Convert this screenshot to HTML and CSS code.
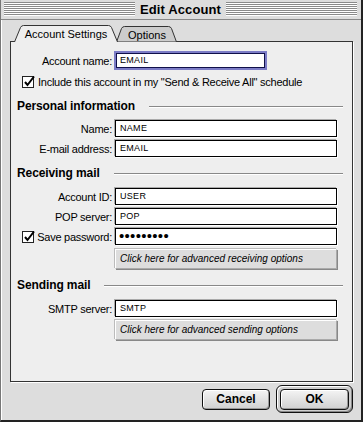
FILE: index.html
```html
<!DOCTYPE html>
<html>
<head>
<meta charset="utf-8">
<link rel="stylesheet" href="styles.css">
</head>
<body>
<div class="window">
  <div class="titlebar">
    <div class="stripes"></div>
    <div class="title">Edit Account</div>
    <div class="stripes"></div>
  </div>
  <div class="content">
    <div class="tabs">
      <div class="tab tab-active">
        <svg class="tab-shape" width="106" height="17" viewBox="0 0 106 17"><path d="M0.5,17 L6.5,2.5 Q7.5,0.5 9.5,0.5 L94.5,0.5 Q96.5,0.5 97.5,2.5 L103.5,17" fill="#eeeeee" stroke="#333" stroke-width="1"/></svg>
        <span class="tab-label">Account Settings</span>
      </div>
      <div class="tab tab-inactive">
        <svg class="tab-shape" width="62" height="16" viewBox="0 0 62 16"><path d="M0.5,16 L5.5,2.5 Q6.5,0.5 8.5,0.5 L52.5,0.5 Q54.5,0.5 55.5,2.5 L60.5,16 Z" fill="#cccccc" stroke="#333" stroke-width="1"/></svg>
        <span class="tab-label">Options</span>
      </div>
    </div>
    <div class="panel">
      <div class="row row-account">
        <label class="label">Account name:</label>
        <div class="field field-focus field-short">EMAIL</div>
      </div>
      <div class="check-row">
        <svg class="checkbox" width="13" height="13" viewBox="0 0 13 13"><rect x="0.5" y="1.5" width="11" height="11" fill="#fff" stroke="#222"/><path d="M3,7 L5.5,10 L12,1.5" fill="none" stroke="#000" stroke-width="2"/></svg>
        <span class="check-text">Include this account in my "Send &amp; Receive All" schedule</span>
      </div>
      <div class="heading h-personal"><span>Personal information</span><div class="rule"></div></div>
      <div class="row r-name">
        <label class="label">Name:</label>
        <div class="field">NAME</div>
      </div>
      <div class="row r-gap">
        <label class="label">E-mail address:</label>
        <div class="field">EMAIL</div>
      </div>
      <div class="heading h-receiving"><span>Receiving mail</span><div class="rule"></div></div>
      <div class="row r-first">
        <label class="label">Account ID:</label>
        <div class="field">USER</div>
      </div>
      <div class="row r-gap">
        <label class="label">POP server:</label>
        <div class="field">POP</div>
      </div>
      <div class="row r-gap">
        <label class="label label-check">
          <svg class="checkbox" width="13" height="13" viewBox="0 0 13 13"><rect x="0.5" y="1.5" width="11" height="11" fill="#fff" stroke="#222"/><path d="M3,7 L5.5,10 L12,1.5" fill="none" stroke="#000" stroke-width="2"/></svg>
          <span>Save password:</span>
        </label>
        <div class="field password">•••••••••</div>
      </div>
      <div class="row r-btn">
        <span></span>
        <div class="adv-btn">Click here for advanced receiving options</div>
      </div>
      <div class="heading h-sending"><span>Sending mail</span><div class="rule"></div></div>
      <div class="row r-first">
        <label class="label">SMTP server:</label>
        <div class="field">SMTP</div>
      </div>
      <div class="row r-btn2">
        <span></span>
        <div class="adv-btn">Click here for advanced sending options</div>
      </div>
    </div>
    <div class="footer">
      <div class="btn">Cancel</div>
      <div class="default-ring"><div class="btn btn-ok">OK</div></div>
    </div>
  </div>
</div>
</body>
</html>
```
FILE: styles.css
```css
html, body {
  margin: 0;
  padding: 0;
  background: #dddddd;
}
.window {
  width: 363px;
  height: 422px;
  box-sizing: border-box;
  background: #dddddd;
  border-left: 1px solid #777;
  border-right: 2px solid #222;
  border-bottom: 2px solid #222;
  box-shadow: inset 1px 0 0 #fff;
  font-family: "Liberation Sans", Arial, sans-serif;
  color: #000;
  display: flex;
  flex-direction: column;
}
.titlebar {
  height: 20px;
  box-sizing: border-box;
  display: flex;
  align-items: center;
  padding: 0 4px 1px 3px;
  border-bottom: 1px solid #888;
  background: #dddddd;
}
.stripes {
  flex: 1;
  height: 14px;
  background: repeating-linear-gradient(to bottom, #8a8a8a 0 1px, #ffffff 1px 2px);
}
.title {
  font-weight: bold;
  font-size: 13px;
  padding: 0 5px;
  letter-spacing: 0.1px;
}
.content {
  flex: 1;
  display: flex;
  flex-direction: column;
  padding: 5px 0 0 9px;
}
.tabs {
  display: flex;
  height: 17px;
  margin-bottom: -1px;
  position: relative;
  z-index: 2;
  padding-left: 4px;
}
.tab {
  position: relative;
  height: 17px;
  display: flex;
  align-items: center;
  justify-content: center;
  font-size: 11px;
}
.tab-shape {
  position: absolute;
  left: 0;
  top: 0;
}
.tab-label {
  position: relative;
  padding-top: 1px;
}
.tab-active {
  width: 106px;
  z-index: 2;
}
.tab-active .tab-label {
  left: -1px;
}
.tab-inactive {
  width: 62px;
  margin-left: -4px;
  margin-top: 1px;
  height: 16px;
  z-index: 1;
}
.panel {
  width: 343px;
  height: 341px;
  box-sizing: border-box;
  background: #eeeeee;
  border: 1px solid #333;
  box-shadow: 1px 1px 0 #fff;
  position: relative;
  z-index: 1;
  font-size: 11px;
}
.row {
  display: grid;
  grid-template-columns: 101px 222px;
  column-gap: 3px;
  align-items: center;
  height: 17px;
}
.label {
  text-align: right;
  white-space: nowrap;
  letter-spacing: -0.25px;
}
.label-check {
  display: flex;
  align-items: center;
  justify-content: space-between;
  padding-left: 11px;
}
.field {
  height: 17px;
  box-sizing: border-box;
  background: #fff;
  border: 1px solid #000;
  box-shadow: -1px -1px 0 #aaa, 1px 1px 0 #fff;
  font-size: 9px;
  line-height: 15px;
  padding-left: 4px;
  letter-spacing: 0.3px;
}
.password {
  font-size: 15px;
  line-height: 14px;
  letter-spacing: 0.3px;
  padding-left: 3px;
}
.row-account {
  margin-top: 9px;
  height: 19px;
}
.field-focus {
  height: 15px;
  border: 1px solid #10104a;
  box-shadow: 0 0 0 2px #7c7cc6;
  line-height: 13px;
  padding-left: 3px;
}
.field-short {
  width: 149px;
  margin-left: 1px;
}
.check-row {
  display: flex;
  align-items: center;
  gap: 3px;
  margin-top: 5px;
  padding-left: 11px;
  height: 13px;
}
.check-text {
  letter-spacing: -0.25px;
  white-space: nowrap;
}
.checkbox {
  display: block;
  flex: none;
}
.heading {
  display: flex;
  align-items: center;
  gap: 14px;
  height: 14px;
  padding: 0 9px 0 6px;
  font-weight: bold;
  font-size: 12px;
  letter-spacing: -0.1px;
}
.rule {
  flex: 1;
  height: 1px;
  background: #888;
  box-shadow: 0 1px 0 #fff;
}
.h-personal { margin-top: 11px; }
.h-receiving { margin-top: 9px; }
.h-sending { margin-top: 9px; }
.r-name { margin-top: 7px; }
.r-gap { margin-top: 3px; }
.r-first { margin-top: 8px; }
.r-btn { margin-top: 4px; height: 20px; }
.r-btn2 { margin-top: 3px; height: 20px; }
.adv-btn {
  height: 20px;
  box-sizing: border-box;
  background: #dddddd;
  border: 1px solid #aaa;
  border-top-color: #fff;
  border-left-color: #fff;
  box-shadow: -1px -1px 0 #bbb, 1px 1px 0 #888;
  font-style: italic;
  font-size: 10px;
  line-height: 18px;
  padding-left: 4px;
}
.footer {
  display: flex;
  justify-content: flex-end;
  align-items: center;
  gap: 6px;
  padding-right: 8px;
  margin-top: 3px;
}
.btn {
  width: 68px;
  height: 21px;
  box-sizing: border-box;
  border: 1px solid #111;
  border-radius: 4px;
  background: linear-gradient(to bottom, #f4f4f4, #d0d0d0);
  box-shadow: inset 1px 1px 0 #fff, inset -1px -1px 0 #999;
  font-weight: bold;
  font-size: 12px;
  text-align: center;
  line-height: 19px;
}
.default-ring {
  width: 77px;
  height: 28px;
  box-sizing: border-box;
  border: 1px solid #111;
  border-radius: 6px;
  background: #cfcfcf;
  box-shadow: inset 1px 1px 0 #fff, inset -1px -1px 0 #888;
  display: flex;
  align-items: center;
  justify-content: center;
}
.btn-ok {
  width: 69px;
}
```
